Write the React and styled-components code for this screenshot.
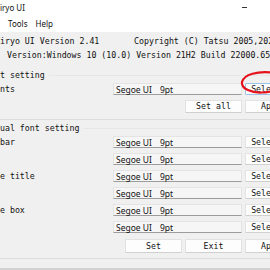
import React from 'react'
import styled, { createGlobalStyle, css } from 'styled-components'

const GlobalStyle = createGlobalStyle`
  html, body {
    margin: 0;
    padding: 0;
    width: 270px;
    height: 270px;
    overflow: hidden;
    background: #f0f0f0;
  }
`

const mono = css`
  font-family: "DejaVu Sans Mono", "Liberation Mono", monospace;
  font-size: 8.25px;
  color: #111;
  white-space: pre;
`

const ui = css`
  font-family: "Noto Sans", "Open Sans", sans-serif;
  color: #111;
  white-space: pre;
`

const Window = styled.div`
  position: relative;
  width: 302px;
  height: 270px;
  display: flex;
  flex-direction: column;
  background: #f0f0f0;
  border-bottom: 2px solid #d2d2d2;
  box-sizing: border-box;
`

const TitleBar = styled.div`
  height: 16px;
  display: flex;
  align-items: center;
  justify-content: space-between;
  background: #ffffff;
  padding-right: 55px;
`

const TitleText = styled.span`
  ${ui};
  font-size: 8px;
  line-height: 16px;
`

const Minimize = styled.span`
  width: 5px;
  height: 1px;
  background: #333;
  margin-bottom: 2px;
`

const MenuBar = styled.div`
  height: 16px;
  display: flex;
  align-items: center;
  gap: 8px;
  padding-left: 8px;
  background: #ffffff;
`

const MenuItem = styled.span`
  ${ui};
  font-size: 8px;
  line-height: 16px;
`

const Content = styled.div`
  display: flex;
  flex-direction: column;
  padding-top: 2px;
`

const InfoLine = styled.div`
  ${mono};
  line-height: 14px;
  height: 14px;
  padding-left: ${({ $indent }) => $indent || 0}px;
`

const Group = styled.section`
  display: flex;
  flex-direction: column;
  margin-top: ${({ $top }) => $top}px;
  padding-bottom: ${({ $bottom }) => $bottom}px;
  border-bottom: 1px solid #dcdcdc;
`

const Legend = styled.div`
  ${mono};
  line-height: 12px;
  height: 12px;
  display: flex;
  align-items: center;
  gap: 4px;

  &::after {
    content: '';
    flex: 1;
    height: 1px;
    background: #e6e6e6;
  }
`

const Rows = styled.div`
  display: flex;
  flex-direction: column;
  gap: 5px;
  margin-top: 2px;
`

const FontRow = styled.div`
  display: grid;
  grid-template-columns: 110px 129px 57px;
  column-gap: 3px;
  align-items: center;
  height: 12px;
`

const RowLabel = styled.span`
  ${mono};
  line-height: 12px;
`

const FontBox = styled.div`
  ${ui};
  font-size: 8.5px;
  height: 12px;
  line-height: 11px;
  box-sizing: border-box;
  padding-left: 2px;
  display: flex;
  gap: 8px;
  background: #f6f6f6;
  border: 1px solid #e4e4e4;
  border-bottom-color: #9c9c9c;
`

const Button = styled.button`
  ${mono};
  width: 57px;
  height: ${({ $h }) => $h || 13}px;
  padding: 0;
  margin: 0;
  box-sizing: border-box;
  background: #fdfdfd;
  border: 1px solid ${({ $focused }) => ($focused ? '#9cc3e5' : '#e2e2e2')};
  border-bottom-color: ${({ $focused }) => ($focused ? '#9cc3e5' : '#d0d0d0')};
  border-radius: 1px;
  text-align: center;
  line-height: 11px;
`

const ButtonRow = styled.div`
  display: flex;
  justify-content: flex-end;
  gap: 3px;
  margin-top: ${({ $top }) => $top}px;
`

const Annotation = styled.svg`
  position: absolute;
  left: 236px;
  top: 68px;
  overflow: visible;
`

const fontRows = ['bar', '', 'e title', '', 'e box', '']

const FontValue = () => (
  <FontBox>
    <span>Segoe UI</span>
    <span>9pt</span>
  </FontBox>
)

const App = () => (
  <>
    <GlobalStyle />
    <Window>
      <TitleBar>
        <TitleText>iryo UI</TitleText>
        <Minimize />
      </TitleBar>
      <MenuBar>
        <MenuItem>Tools</MenuItem>
        <MenuItem>Help</MenuItem>
      </MenuBar>
      <Content>
        <InfoLine>{'iryo UI Version 2.41       Copyright (C) Tatsu 2005,2021'}</InfoLine>
        <InfoLine $indent={7}>Version:Windows 10 (10.0) Version 21H2 Build 22000.652</InfoLine>

        <Group $top={7} $bottom={6}>
          <Legend>t setting</Legend>
          <Rows>
            <FontRow>
              <RowLabel>nts</RowLabel>
              <FontValue />
              <Button $focused $h={12}>Select...</Button>
            </FontRow>
          </Rows>
          <ButtonRow $top={5}>
            <Button>Set all</Button>
            <Button>Apply</Button>
          </ButtonRow>
        </Group>

        <Group $top={2} $bottom={5}>
          <Legend>ual font setting</Legend>
          <Rows>
            {fontRows.map((label, idx) => (
              <FontRow key={idx}>
                <RowLabel>{label}</RowLabel>
                <FontValue />
                <Button $h={12}>Select...</Button>
              </FontRow>
            ))}
          </Rows>
          <ButtonRow $top={6}>
            <Button $h={14}>Set</Button>
            <Button $h={14}>Exit</Button>
            <Button $h={14}>Apply</Button>
          </ButtonRow>
        </Group>
      </Content>

      <Annotation width="40" height="30" viewBox="0 0 40 30">
        <path
          d="M36 4.5 C22 3, 8 6, 6 14 C5 21, 16 25, 26 24.5 C30 24.3, 34 23.5, 37 23"
          fill="none"
          stroke="#e5121c"
          strokeWidth="2.2"
          strokeLinecap="round"
        />
      </Annotation>
    </Window>
  </>
)

export default App
